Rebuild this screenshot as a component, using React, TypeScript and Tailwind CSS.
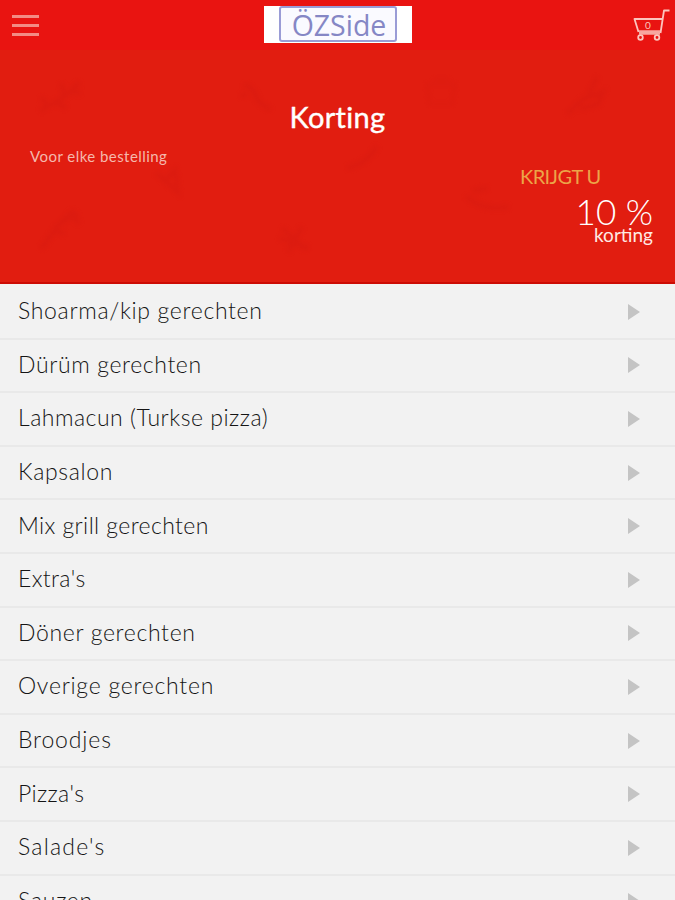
type Category = { label: string; tracking: string };

const CATEGORIES: Category[] = [
  { label: 'Shoarma/kip gerechten', tracking: 'tracking-[0.68px]' },
  { label: 'Dürüm gerechten', tracking: 'tracking-[0.63px]' },
  { label: 'Lahmacun (Turkse pizza)', tracking: 'tracking-[0.5px]' },
  { label: 'Kapsalon', tracking: 'tracking-[0.65px]' },
  { label: 'Mix grill gerechten', tracking: 'tracking-[0.4px]' },
  { label: "Extra's", tracking: 'tracking-[0.35px]' },
  { label: 'Döner gerechten', tracking: 'tracking-[0.67px]' },
  { label: 'Overige gerechten', tracking: 'tracking-[0.75px]' },
  { label: 'Broodjes', tracking: 'tracking-[0.85px]' },
  { label: "Pizza's", tracking: 'tracking-[0.35px]' },
  { label: "Salade's", tracking: 'tracking-[1.2px]' },
  { label: 'Sauzen', tracking: 'tracking-[0.75px]' },
];

function CartIcon() {
  return (
    <svg width="40" height="34" viewBox="0 0 40 34" fill="none" stroke="#fcc5bd" strokeWidth="1.8" strokeLinejoin="round">
      <path d="M38.500 2.500h-5.500L29.500 25" />
      <path d="M31 11H3.500l4 13" />
      <path d="M8 24.500h21" stroke="#f7a69f" strokeWidth="4.500" />
      <circle cx="9.500" cy="29.500" r="2.300" />
      <circle cx="26" cy="29.500" r="2.300" />
    </svg>
  );
}

// faint food drawings behind the discount text
function FoodPattern() {
  return (
    <svg className="absolute inset-0 blur-[2px]" width="675" height="234" viewBox="0 0 675 234" fill="none" stroke="#cf1710" strokeWidth="5" opacity="0.26">
      <path d="M40 61l24-14 16-15M48 56l-7-9M56 52l10 6M64 45l-3-12M70 42l11 1" />
      <path d="M244 34l9 6 6 12 12 8M248 44l-8 2" />
      <path d="M427 34h28l-3 20h-22zM434 29h15" strokeWidth="2" />
      <path d="M567 64l16-15 20-7-5 12-18 5M589 44l8-17" />
      <path d="M347 118q20-4 30-22" />
      <path d="M156 123l22 19-3-22-10 10" />
      <path d="M41 199l17-24 20-12M53 180l12 4M60 173l12-11 7 12" />
      <path d="M279 188l30 10M288 202l14-25M282 178l24 22" />
      <path d="M466 146q14 15 43 11M473 141l15-3" />
    </svg>
  );
}

export default function App() {
  return (
    <div className="h-[900px] w-[675px] overflow-hidden bg-[#f2f2f2] font-[Lato,sans-serif]">
      <header className="flex h-[50px] items-start bg-[#e91411] pr-[4px] pl-3">
        <div className="flex w-[27px] flex-col gap-[6px] pt-[15px]">
          <span className="h-[3px] bg-[#f38b84]" />
          <span className="h-[3px] bg-[#f38b84]" />
          <span className="h-[3px] bg-[#f38b84]" />
        </div>
        <div className="mt-[6px] ml-[225px] flex h-[37px] w-[148px] justify-center bg-white">
          <div className="flex h-[36px] w-[118px] items-center justify-center rounded-[3px] border-2 border-[#9a9cd6] bg-[#fafaff] pt-[3px] pl-[2px] font-['Open_Sans',sans-serif] text-[28.5px] leading-none text-[#8587c5]">
            ÖZSide
          </div>
        </div>
        <div className="relative mt-[8px] ml-auto">
          <CartIcon />
          <span className="absolute top-[12px] left-[14px] text-[10px] leading-none text-[#fbc4bc]">0</span>
        </div>
      </header>

      <section className="relative flex h-[234px] flex-col border-b-2 border-[#cc0c04] bg-[#e11d10]">
        <FoodPattern />
        <h1 className="relative mt-[50px] text-center text-[29px] leading-[34px] tracking-[0.3px] text-white [-webkit-text-stroke:0.4px_white]">Korting</h1>
        <p className="relative mt-[13px] pl-[30px] text-[15px] leading-[18px] tracking-[0.45px] text-[#f5b8ac]">Voor elke bestelling</p>
        <p className="relative -mt-px pl-[520px] text-[20px] leading-[24px] tracking-[-0.6px] text-[#eca548]">KRIJGT U</p>
        <p className="relative mt-[9px] pr-[22px] text-right text-[35px] leading-[28px] font-light text-white">10 %</p>
        <p className="relative pr-[22px] text-right text-[19px] leading-[20px] text-[#ffe9e4]">korting</p>
      </section>

      <ul className="pt-[2px]">
        {CATEGORIES.map((c) => (
          <li
            key={c.label}
            className="flex h-[53.6px] items-center justify-between border-b-2 border-[#e9e9e9] pr-[35px] pb-[3px] pl-[18px]"
          >
            <span className={`text-[23px] leading-[28px] font-light whitespace-nowrap text-[#151515] ${c.tracking}`}>
              {c.label}
            </span>
            <svg className="mt-[3px]" width="12" height="16" viewBox="0 0 12 16" fill="#c4c4c4">
              <path d="M0 0l12 8-12 8z" />
            </svg>
          </li>
        ))}
      </ul>
    </div>
  );
}
